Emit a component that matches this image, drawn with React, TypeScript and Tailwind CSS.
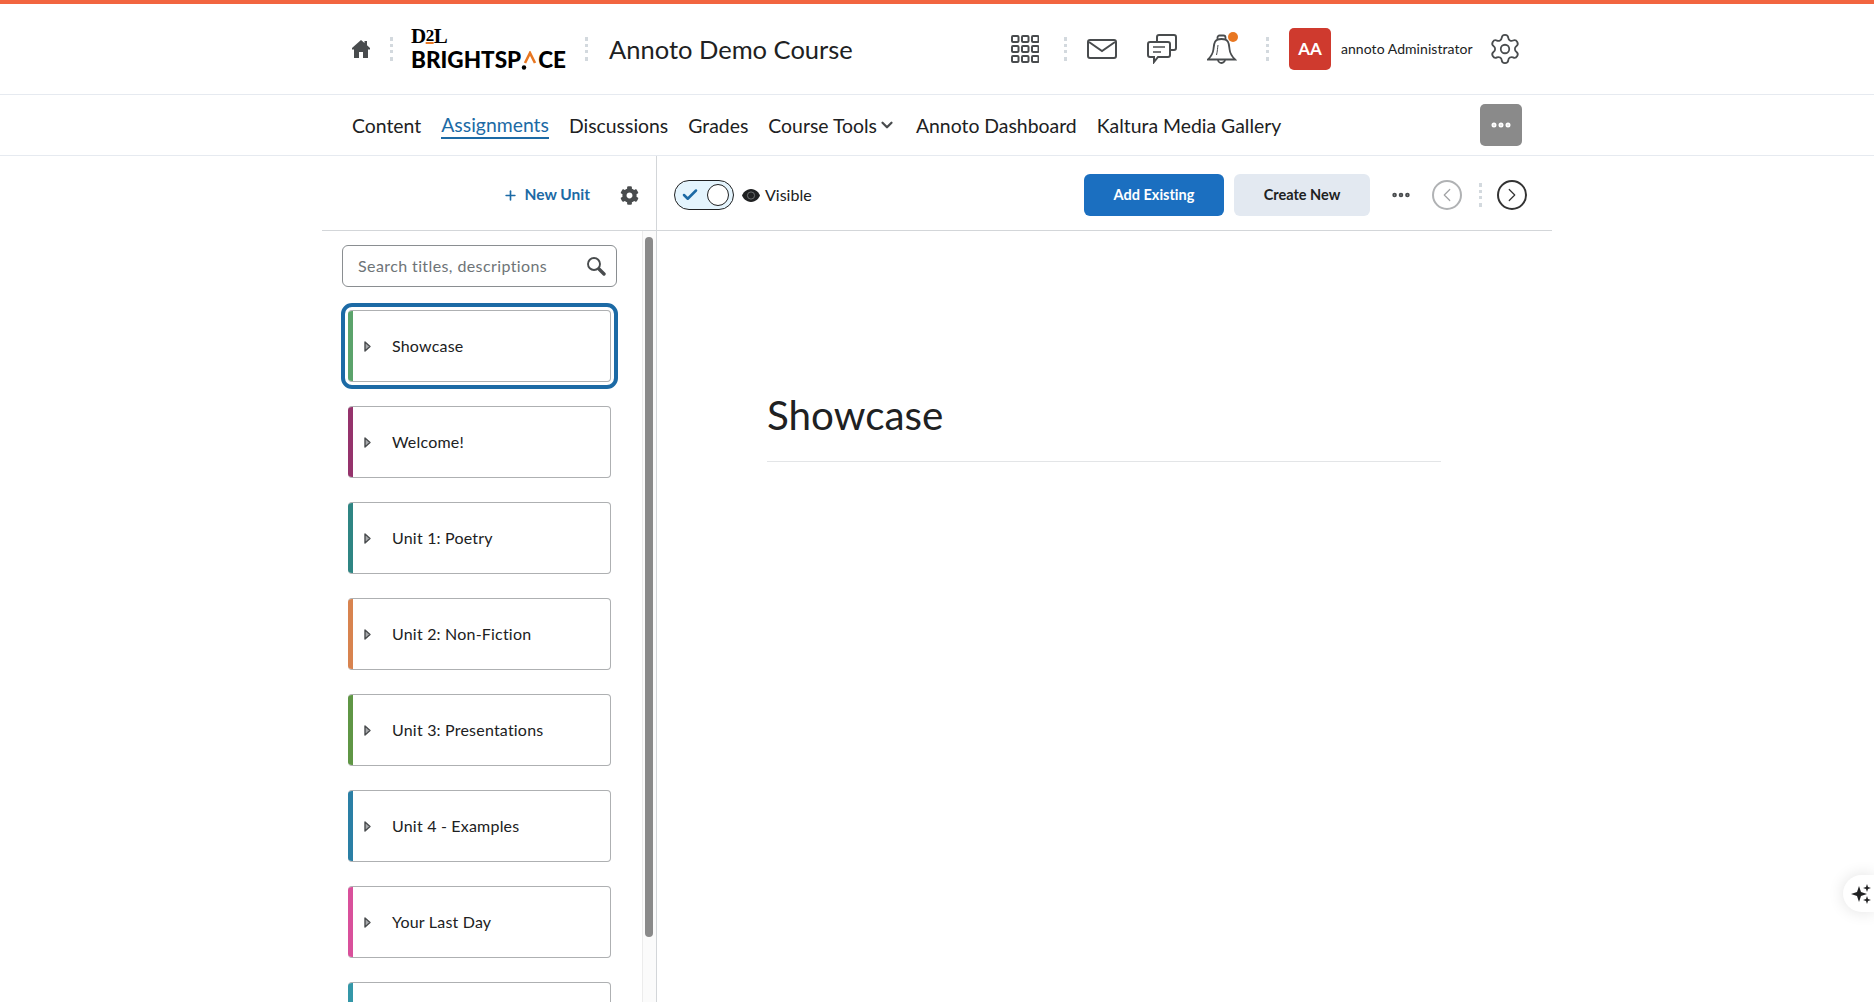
import React from 'react';
import { FaCog } from 'react-icons/fa';
import { ChevronDown, ChevronLeft, ChevronRight, Plus, Settings, Check, MoreHorizontal } from 'lucide-react';

const units = [
  { title: 'Showcase', color: 'bg-[#5ba36b]', selected: true },
  { title: 'Welcome!', color: 'bg-[#95336c]' },
  { title: 'Unit 1: Poetry', color: 'bg-[#2f8583]' },
  { title: 'Unit 2: Non-Fiction', color: 'bg-[#d8834f]' },
  { title: 'Unit 3: Presentations', color: 'bg-[#5f9645]' },
  { title: 'Unit 4 - Examples', color: 'bg-[#2a7fa5]' },
  { title: 'Your Last Day', color: 'bg-[#d9509b]' },
  { title: '', color: 'bg-[#3497a8]' },
];

const Sep: React.FC<{ className?: string }> = ({ className = '' }) => (
  <div className={`h-[24px] w-0 border-l-[3px] border-dotted border-[#d3d9de] ${className}`} />
);

const Logo = () => (
  <div className="w-[155px] text-black select-none">
    <div className="h-[19px] text-[21px] leading-[19px] font-bold font-['Liberation_Serif',serif] tracking-[-0.5px]">
      D<span className="relative -top-[2px] text-[17px] underline decoration-[#e87722] decoration-2 underline-offset-1">2</span>L
    </div>
    <div className="mt-[2px] flex items-center h-[24px] text-[22.5px] leading-[24px] font-black whitespace-nowrap">
      BRIGHTSP
      <svg width="17" height="19" viewBox="0 0 17 19" className="mt-[1px] shrink-0">
        <path d="M4 12 L9 2 L14 12" fill="none" stroke="#e87722" strokeWidth="2.6" />
        <circle cx="3" cy="16.5" r="2.2" fill="#000" />
      </svg>
      CE
    </div>
  </div>
);

const GridIcon = () => (
  <svg width="28" height="28" viewBox="0 0 28 28" fill="none" stroke="#494c4e" strokeWidth="2">
    {[1, 11, 21].map((y) =>
      [1, 11, 21].map((x) => <rect key={`${x}-${y}`} x={x} y={y} width="6.5" height="6" rx="1" />),
    )}
  </svg>
);

export default function App() {
  return (
    <div className="h-screen overflow-hidden flex flex-col bg-white text-[#202122] font-['Lato',sans-serif] [font-variant-ligatures:none]">
      <div className="h-[4px] bg-[#f26540] shrink-0" />

      {/* Header */}
      <div className="h-[91px] shrink-0 border-b border-[#e6eaf0]">
        <div className="w-[1230px] h-full mx-auto pl-[30px] pr-[30px] flex items-center">
          <svg width="18" height="18" viewBox="0 0 18 18" fill="#494c4e">
            <path d="M9 0 L12.5 3 V1 H15 V5.2 L18 8 V9.5 H16 V18 H11 V12 H7 V18 H2 V9.5 H0 V8 Z" />
          </svg>
          <Sep className="ml-[20px]" />
          <div className="ml-[18px]"><Logo /></div>
          <Sep className="ml-[19px]" />
          <div className="ml-[21px] text-[25.5px] whitespace-nowrap">Annoto Demo Course</div>

          <div className="ml-auto flex items-center">
            <GridIcon />
            <Sep className="ml-[25px]" />
            <svg className="ml-[20px]" width="30" height="20" viewBox="0 0 30 20" fill="none" stroke="#494c4e" strokeWidth="2">
              <rect x="1" y="1" width="28" height="18" rx="2" />
              <path d="M2 3 L15 12 L28 3" />
            </svg>
            <svg className="ml-[30px]" width="30" height="30" viewBox="0 0 30 30" fill="none" stroke="#494c4e" strokeWidth="2">
              <path d="M10 7 V3 a2 2 0 0 1 2 -2 H27 a2 2 0 0 1 2 2 V14 a2 2 0 0 1 -2 2 H24" />
              <path d="M3 8 H21 a2 2 0 0 1 2 2 V21 a2 2 0 0 1 -2 2 H11 L7 28 V23 H3 a2 2 0 0 1 -2 -2 V10 a2 2 0 0 1 2 -2 Z" fill="#fff" />
              <path d="M6 13 H18 M6 18 H14" strokeWidth="1.5" />
            </svg>
            <div className="relative ml-[30px] w-[30px] h-[30px]">
              <svg width="30" height="30" viewBox="0 0 30 30" fill="none" stroke="#494c4e" strokeWidth="1.8">
                <path d="M10.5 5.5 V3.5 a2 2 0 0 1 2 -2 h4 a2 2 0 0 1 2 2 V5.5" />
                <path d="M14.5 5 C7 5 7 10 6.5 15 C6 20 4.5 22 1 25.5 H28 C24.5 22 23 20 22.5 15 C22 10 22 5 14.5 5 Z" />
                <path d="M11 25.5 a3.5 3.5 0 0 0 7 0" />
                <path d="M11 11 C10.5 14 10.5 17 9.5 21" strokeWidth="1" />
              </svg>
              <div className="absolute -top-[2px] right-[-1px] w-[10px] h-[10px] rounded-full bg-[#e87722]" />
            </div>
            <Sep className="ml-[29px]" />
            <div className="ml-[20px] w-[42px] h-[42px] rounded-[5px] bg-[#cf3a2e] flex items-center justify-center text-white font-bold text-[17px]">
              AA
            </div>
            <div className="ml-[10px] -mt-[1px] w-[131px] text-[14px] tracking-[0.05px] whitespace-nowrap">annoto Administrator</div>
            <Settings className="ml-[16px] text-[#494c4e]" size={34} strokeWidth={1.25} />
          </div>
        </div>
      </div>

      {/* Course nav */}
      <div className="h-[61px] shrink-0 border-b border-[#e6eaf0]">
        <div className="w-[1230px] h-full mx-auto pl-[30px] pr-[30px] flex items-center gap-[20px] text-[19.4px] whitespace-nowrap">
          <span className="pt-[1px]">Content</span>
          <span className="mt-[2px] text-[#1c6aa5] border-b-2 border-[#1c6aa5] leading-[24px]">Assignments</span>
          <span className="pt-[1px]">Discussions</span>
          <span className="pt-[1px]">Grades</span>
          <span className="pt-[1px] flex items-center gap-[1px]">
            Course Tools
            <ChevronDown size={18} strokeWidth={3} className="text-[#494c4e]" />
          </span>
          <span className="pt-[1px]">Annoto Dashboard</span>
          <span className="pt-[1px]">Kaltura Media Gallery</span>
          <button className="ml-auto w-[42px] h-[42px] rounded-[5px] bg-[#8a8a8a] flex items-center justify-center text-white">
            <MoreHorizontal size={24} strokeWidth={3} />
          </button>
        </div>
      </div>

      <div className="w-[1230px] mx-auto flex-1 min-h-0 flex flex-col">
        {/* Toolbar */}
        <div className="h-[75px] shrink-0 flex border-b border-[#d3d6d9]">
          <div className="w-[335px] shrink-0 border-r border-[#d3d6d9] pt-[4px] pr-[17px] flex items-center justify-end">
            <Plus size={15} strokeWidth={2.6} className="text-[#1c6aa5]" />
            <span className="ml-[7px] text-[15.5px] font-bold text-[#1c6aa5]">New Unit</span>
            <FaCog className="ml-[30px] text-[#494c4e]" size={19} />
          </div>
          <div className="flex-1 pt-[4px] pl-[17px] pr-[25px] flex items-center">
            <div className="relative w-[60px] h-[30px] rounded-full border border-[#202122] bg-[#e4f4fd]">
              <Check size={18} strokeWidth={3.4} className="absolute left-[6px] top-[5px] text-[#1c6aa5]" />
              <div className="absolute right-[4px] top-[3px] w-[22px] h-[22px] rounded-full border border-[#202122] bg-white" />
            </div>
            <svg className="ml-[8px]" width="18" height="13" viewBox="0 0 18 13">
              <path d="M9 0 C14 0 17 4 18 6.5 C17 9 14 13 9 13 C4 13 1 9 0 6.5 C1 4 4 0 9 0 Z" fill="#202122" />
              <circle cx="9" cy="6.5" r="3.6" fill="none" stroke="#8a8c8e" strokeWidth="0.7" />
            </svg>
            <span className="ml-[5px] text-[16px]">Visible</span>

            <button className="ml-auto w-[140px] h-[42px] rounded-[6px] bg-[#1b6fc0] text-white font-bold text-[14.5px]">Add Existing</button>
            <button className="ml-[10px] w-[136px] h-[42px] rounded-[6px] bg-[#e3e9f1] font-bold text-[14.5px]">Create New</button>
            <MoreHorizontal className="ml-[20px] text-[#494c4e]" size={22} strokeWidth={3} />
            <div className="ml-[20px] w-[30px] h-[30px] rounded-full border-2 border-[#b0b2b4] flex items-center justify-center text-[#a0a2a4]">
              <ChevronLeft size={22} strokeWidth={1.3} />
            </div>
            <Sep className="ml-[17px]" />
            <div className="ml-[15px] w-[30px] h-[30px] rounded-full border-2 border-[#333] flex items-center justify-center text-[#333]">
              <ChevronRight size={22} strokeWidth={1.3} />
            </div>
          </div>
        </div>

        <div className="flex-1 min-h-0 flex overflow-hidden">
          {/* Units sidebar */}
          <div className="w-[335px] shrink-0 flex border-r border-[#d3d6d9]">
            <div className="w-[320px] pl-[20px] pt-[14px]">
              <div className="w-[275px] h-[42px] rounded-[6px] border border-[#8a8e91] pl-[15px] pr-[10px] flex items-center justify-between">
                <span className="text-[16px] text-[#6e7477] tracking-[0.4px]">Search titles, descriptions</span>
                <svg width="20" height="20" viewBox="0 0 20 20" fill="none" stroke="#494c4e">
                  <circle cx="8" cy="8" r="6" strokeWidth="1.9" />
                  <path d="M13 13 L18 18" strokeWidth="3.4" strokeLinecap="round" />
                </svg>
              </div>
              <div className="mt-[23px] ml-[6px] flex flex-col gap-[24px]">
                {units.map((unit) => (
                  <div
                    key={unit.color}
                    className={`w-fit ${unit.selected ? '-m-[7px] p-[3px] rounded-[11px] border-4 border-[#1c6aa5]' : ''}`}
                  >
                    <div className="w-[263px] h-[72px] rounded-[4px] overflow-hidden flex items-center border border-l-0 border-[#aeb0b2]">
                      <div className={`w-[5px] h-full shrink-0 ${unit.color}`} />
                      <svg className="ml-[11px]" width="7" height="11" viewBox="0 0 7 11">
                        <path d="M1 1 L6 5.5 L1 10 Z" fill="#a8aaac" stroke="#494c4e" strokeWidth="1.4" strokeLinejoin="round" />
                      </svg>
                      <span className="ml-[21px] text-[16px] tracking-[0.2px] whitespace-nowrap">{unit.title}</span>
                    </div>
                  </div>
                ))}
              </div>
            </div>
            <div className="w-[14px] border-l border-[#ececec] bg-[#fbfbfb] pl-[2px] pt-[6px]">
              <div className="w-[8px] h-[700px] rounded-full bg-[#8a8a8a]" />
            </div>
          </div>

          {/* Unit content */}
          <div className="pl-[110px] pt-[160px]">
            <div className="w-[674px] pb-[22px] border-b border-[#e3e5e7]">
              <h1 className="text-[40.4px] leading-[48px]">Showcase</h1>
            </div>
          </div>
        </div>
      </div>

      {/* Floating assistant button */}
      <div className="absolute left-[1843px] top-[875px] w-[31px] h-[37px] rounded-l-full bg-white shadow-[0_0_16px_rgba(0,0,0,0.12)] flex items-center pl-[8px]">
        <svg width="22" height="20" viewBox="0 0 22 20" fill="#202122">
          <path d="M8 4 L10 10 L16 12 L10 14 L8 20 L6 14 L0 12 L6 10 Z" transform="translate(0,-2)" />
          <path d="M16 0 L17 3 L20 4 L17 5 L16 8 L15 5 L12 4 L15 3 Z" />
          <path d="M16 12 L17 15 L20 16 L17 17 L16 20 L15 17 L12 16 L15 15 Z" />
        </svg>
      </div>
    </div>
  );
}
